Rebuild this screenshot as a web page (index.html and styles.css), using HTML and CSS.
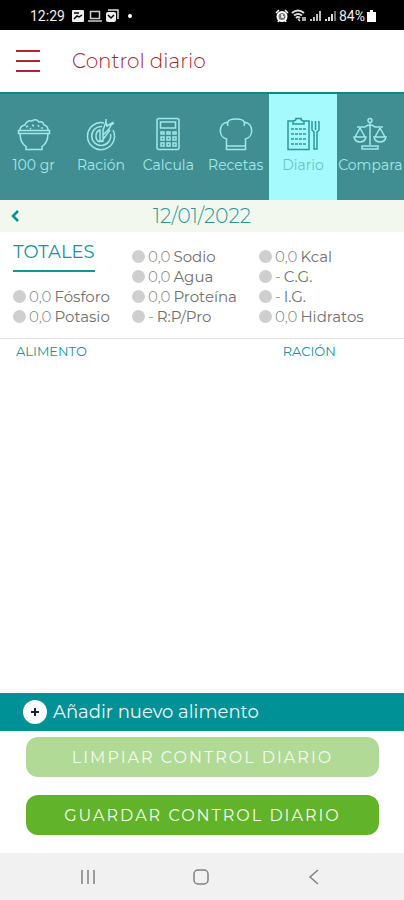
FILE: index.html
```html
<!DOCTYPE html>
<html lang="es">
<head>
  <meta charset="UTF-8" />
  <meta name="viewport" content="width=device-width, initial-scale=1.0"/>
  <title>Control diario</title>
  <link rel="stylesheet" href="styles.css">
</head>
<body>

<div class="status-bar">
  <div class="status-group">
    <span class="clock">12:29</span>
    <svg width="14" height="14" viewBox="0 0 14 14"><rect x="1" y="1" width="12" height="12" rx="1" fill="#eee"/><path d="M3 10l3-3 2 1 3-2M3 4h5" fill="none" stroke="#000" stroke-width="1.5"/></svg>
    <svg width="14" height="14" viewBox="0 0 14 14"><path d="M2.500 2.500h9v7h-9zM0 12h14" fill="none" stroke="#ccc" stroke-width="1.500"/></svg>
    <svg width="14" height="14" viewBox="0 0 14 14"><path d="M3 1h10v9" fill="none" stroke="#ddd" stroke-width="1.500"/><rect x="1" y="3" width="10" height="10" rx="2" fill="#eee"/><path d="M3 6l3 3 3-3" fill="none" stroke="#000" stroke-width="1.500"/></svg>
    <span class="status-dot"></span>
  </div>
  <div class="status-group status-right">
    <svg width="14" height="14" viewBox="0 0 14 14"><circle cx="7" cy="7.500" r="4.500" fill="#777" stroke="#fff" stroke-width="2"/><path d="M1 4l3-3M13 4l-3-3M3 13l1-2M11 13l-1-2M7 5v3h2" fill="none" stroke="#fff" stroke-width="1.500"/></svg>
    <svg width="16" height="14" viewBox="0 0 16 14"><path d="M1 4q6-5 12 0M3 6.500q4-3 8 0M5 9q2-2 4 0" fill="none" stroke="#ddd" stroke-width="2"/><path d="M7 10l2 2M12 8v4M14 8v4" stroke="#ddd" stroke-width="1.500"/></svg>
    <svg width="13" height="14" viewBox="0 0 13 14"><path d="M2 12v-2M5 12V8M8 12V5M11 12V2" stroke="#bbb" stroke-width="2"/></svg>
    <svg width="13" height="14" viewBox="0 0 13 14"><path d="M2 12v-2M5 12V8M8 12V5" stroke="#ddd" stroke-width="2"/><path d="M11 12V2" stroke="#777" stroke-width="2"/></svg>
    <span class="battery">84%</span>
    <svg width="9" height="14" viewBox="0 0 9 14"><path d="M0 3h3V1h3v2h3v10H0z" fill="#fff"/></svg>
  </div>
</div>

<header class="header">
  <button class="menu-btn" type="button" aria-label="Menú">
    <span></span><span></span><span></span>
  </button>
  <h1>Control diario</h1>
</header>

<nav class="tabs">
  <a href="#gramos" class="tab">
    <svg viewBox="0 0 34 34"><path d="M1.500 13.500h31v3h-31zM3 16.500q0 9 6 13v3h16v-3q6-4 6-13M3 13q0-4 5-5 2-5 7-4 4-3 7 1 4-1 5 3 4 1 4 5M9 10l2-1M15 8l2 1M21 8l1 2M13 12l1-1M24 11h2"/></svg>
    <span>100 gr</span>
  </a>
  <a href="#racion" class="tab">
    <svg viewBox="0 0 34 34"><path d="M20 6A13.500 13.500 0 1 0 29 13M18 9.500A9.500 9.500 0 1 0 26.500 17M16 25V13q-4 1-4 6t4 6M17 25l9-12M19 25V13l3-8 1 4 5-3-3 6-6 6M22 8V2M26 9l4-3"/></svg>
    <span>Ración</span>
  </a>
  <a href="#calcula" class="tab">
    <svg viewBox="0 0 34 34"><rect x="6" y="1.500" width="22" height="31" rx="2"/><rect x="9.500" y="5" width="15" height="6"/><path d="M10 15h3v2h-3zM16 15h3v2h-3zM22 15h3v2h-3zM10 20h3v3h-3zM16 20h3v3h-3zM22 20h3v3h-3zM10 26h3v3h-3zM16 26h3v3h-3zM22 26h3v3h-3z"/></svg>
    <span>Calcula</span>
  </a>
  <a href="#recetas" class="tab">
    <svg viewBox="0 0 34 34"><path d="M7.500 32.500V22C-1 20-1 6 9 5c1-4 15-4 16 0 10 1 10 15 1.500 17v10.500zM7.500 29h19M9 5q-1 2 0 4M25 5q1 2 0 4"/></svg>
    <span>Recetas</span>
  </a>
  <a href="#diario" class="tab active" aria-current="page">
    <svg viewBox="0 0 34 34"><path d="M7 4H2v28.500h21V4h-5M7 7V4q3 0 3-2.500h5Q15 4 18 4v3z"/><path d="M5 12h15M5 17h15M5 22h15M5 27h15" stroke-dasharray="3 1"/><path d="M26 4v9l2 2v17h3V15l2-2V4M29.500 4v9"/></svg>
    <span>Diario</span>
  </a>
  <a href="#compara" class="tab">
    <svg viewBox="0 0 34 34"><circle cx="17" cy="3.500" r="2"/><path d="M17 6v22M4 10h8q2-2 5-2t5 2h8M7 11L2 20M7 11l5 9M1 20h12q-1 5-6 5t-6-5zM27 11l-5 9M27 11l5 9M21 20h12q-1 5-6 5t-6-5zM9 29h16v3H9z"/></svg>
    <span>Compara</span>
  </a>
</nav>

<div class="date-bar">
  <button class="prev-btn" type="button" aria-label="Día anterior">
    <svg width="10" height="14" viewBox="0 0 10 14"><path d="M8 2L3 7l5 5" fill="none" stroke="#008f94" stroke-width="2.500"/></svg>
  </button>
  <span class="date">12/01/2022</span>
</div>

<section class="totals">
  <div class="totals-col">
    <h2>TOTALES</h2>
    <ul>
      <li><b>0,0</b> Fósforo</li>
      <li><b>0,0</b> Potasio</li>
    </ul>
  </div>
  <ul>
    <li><b>0,0</b> Sodio</li>
    <li><b>0,0</b> Agua</li>
    <li><b>0,0</b> Proteína</li>
    <li><b>-</b> R:P/Pro</li>
  </ul>
  <ul>
    <li><b>0,0</b> Kcal</li>
    <li><b>-</b> C.G.</li>
    <li><b>-</b> I.G.</li>
    <li><b>0,0</b> Hidratos</li>
  </ul>
</section>

<main class="foods">
  <table>
    <thead>
      <tr><th class="col-food">ALIMENTO</th><th>RACIÓN</th></tr>
    </thead>
    <tbody></tbody>
  </table>
</main>

<button class="add-btn" type="button">
  <svg width="24" height="24" viewBox="0 0 24 24"><circle cx="12" cy="12" r="12" fill="#fff"/><path d="M12 8v8M8 12h8" stroke="#123" stroke-width="2"/></svg>
  Añadir nuevo alimento
</button>

<div class="actions">
  <button class="btn btn-clear" type="button">LIMPIAR CONTROL DIARIO</button>
  <button class="btn btn-save" type="button">GUARDAR CONTROL DIARIO</button>
</div>

<div class="phone-nav">
  <button type="button" aria-label="Recientes">
    <svg width="18" height="18" viewBox="0 0 18 18"><path d="M3 2v14M9 2v14M15 2v14"/></svg>
  </button>
  <button type="button" aria-label="Inicio">
    <svg width="18" height="18" viewBox="0 0 18 18"><rect x="2" y="2" width="14" height="14" rx="4"/></svg>
  </button>
  <button type="button" aria-label="Atrás">
    <svg width="18" height="18" viewBox="0 0 18 18"><path d="M13 2L5 9l8 7"/></svg>
  </button>
</div>

</body>
</html>
```
FILE: styles.css
```css
* {
  box-sizing: border-box;
}

body {
  margin: 0;
  min-height: 100vh;
  display: flex;
  flex-direction: column;
  background: #fff;
  color: #707070;
  font-family: Montserrat, Inter, sans-serif;
  font-weight: 400;
}

button {
  border: none;
  padding: 0;
  background: none;
  font-family: inherit;
  font-weight: inherit;
  cursor: pointer;
}

h1, h2, ul {
  margin: 0;
  padding: 0;
  font-weight: 400;
}

/* phone status bar */
.status-bar {
  display: flex;
  justify-content: space-between;
  height: 30px;
  padding: 2px 28px 0 30px;
  background: #000;
  color: #eee;
  font-family: Roboto, sans-serif;
  font-size: 14px;
}

.status-group {
  display: flex;
  align-items: center;
  gap: 3px;
}

.status-right {
  gap: 2px;
}

.clock {
  margin-right: 3px;
}

.status-dot {
  width: 4px;
  height: 4px;
  margin-left: 6px;
  border-radius: 50%;
  background: #fff;
}

.header {
  display: flex;
  align-items: center;
  gap: 32px;
  height: 62px;
  padding: 0 16px;
}

.header h1 {
  color: #a02834;
  font-size: 20px;
  font-weight: 300;
}

.menu-btn {
  display: flex;
  flex-direction: column;
  gap: 8px;
  width: 24px;
}

.menu-btn span {
  height: 2px;
  background: #b02530;
}

/* tabs */
.tabs {
  display: grid;
  grid-template-columns: repeat(6, minmax(0, 1fr));
  height: 108px;
  background: #408e92;
  border-top: 2px solid #148487;
}

.tab {
  display: flex;
  flex-direction: column;
  align-items: center;
  gap: 4px;
  padding-top: 23px;
  color: #a0e9ea;
  font-size: 14px;
  line-height: 20px;
  text-decoration: none;
}

.tab svg {
  width: 34px;
  height: 34px;
  fill: none;
  stroke: currentColor;
  stroke-width: 1.5;
}

.tab.active {
  background: #a5fafd;
  color: #6fbfc1;
}

.tab.active svg {
  stroke: #2b999b;
}

.date-bar {
  display: grid;
  grid-template-columns: 20px 1fr 20px;
  align-items: center;
  height: 32px;
  padding: 0 10px;
  background: #f3f8ef;
}

.prev-btn {
  display: flex;
}

.date {
  color: #269497;
  font-size: 20px;
  font-weight: 300;
  line-height: 32px;
  text-align: center;
}

/* totals */
.totals {
  display: grid;
  grid-template-columns: 119fr 127fr 132fr;
  align-items: end;
  padding: 10px 13px 12px;
  border-bottom: 1px solid #e0e0e0;
}

.totals h2 {
  width: 82px;
  height: 30px;
  margin-bottom: 14px;
  border-bottom: 2px solid #169497;
  color: #169497;
  font-size: 18px;
  line-height: 20px;
  text-align: center;
}

.totals ul {
  list-style: none;
}

.totals li {
  display: flex;
  align-items: center;
  gap: 3px;
  height: 20px;
  font-size: 15px;
  white-space: nowrap;
}

.totals li::before {
  content: "";
  width: 13px;
  height: 13px;
  border-radius: 50%;
  background: #cfcfcf;
}

.totals b {
  color: #808080;
  font-weight: 300;
}

/* food list */
.foods {
  flex: 1;
}

.foods table {
  width: 100%;
  border-collapse: collapse;
}

.foods th {
  padding: 4px 0 4px 16px;
  color: #169497;
  font-size: 13px;
  font-weight: 400;
  line-height: 16px;
  text-align: left;
}

.col-food {
  width: 66%;
}

.add-btn {
  display: flex;
  align-items: center;
  gap: 6px;
  height: 38px;
  padding: 0 23px;
  background: #009197;
  color: #e9f7f7;
  font-size: 18px;
}

.actions {
  display: flex;
  flex-direction: column;
  gap: 18px;
  padding: 6px 25px 18px 26px;
}

.btn {
  height: 40px;
  border-radius: 12px;
  color: #f3fced;
  font-size: 16px;
  letter-spacing: 2px;
}

.btn-clear {
  background: #b0da96;
}

.btn-save {
  background: #61b329;
}

/* phone navigation */
.phone-nav {
  display: flex;
  justify-content: space-between;
  align-items: center;
  height: 47px;
  padding: 0 81px 0 79px;
  background: #f1f1f1;
}

.phone-nav button {
  display: flex;
}

.phone-nav svg {
  fill: none;
  stroke: #808080;
  stroke-width: 1.5;
}
```
